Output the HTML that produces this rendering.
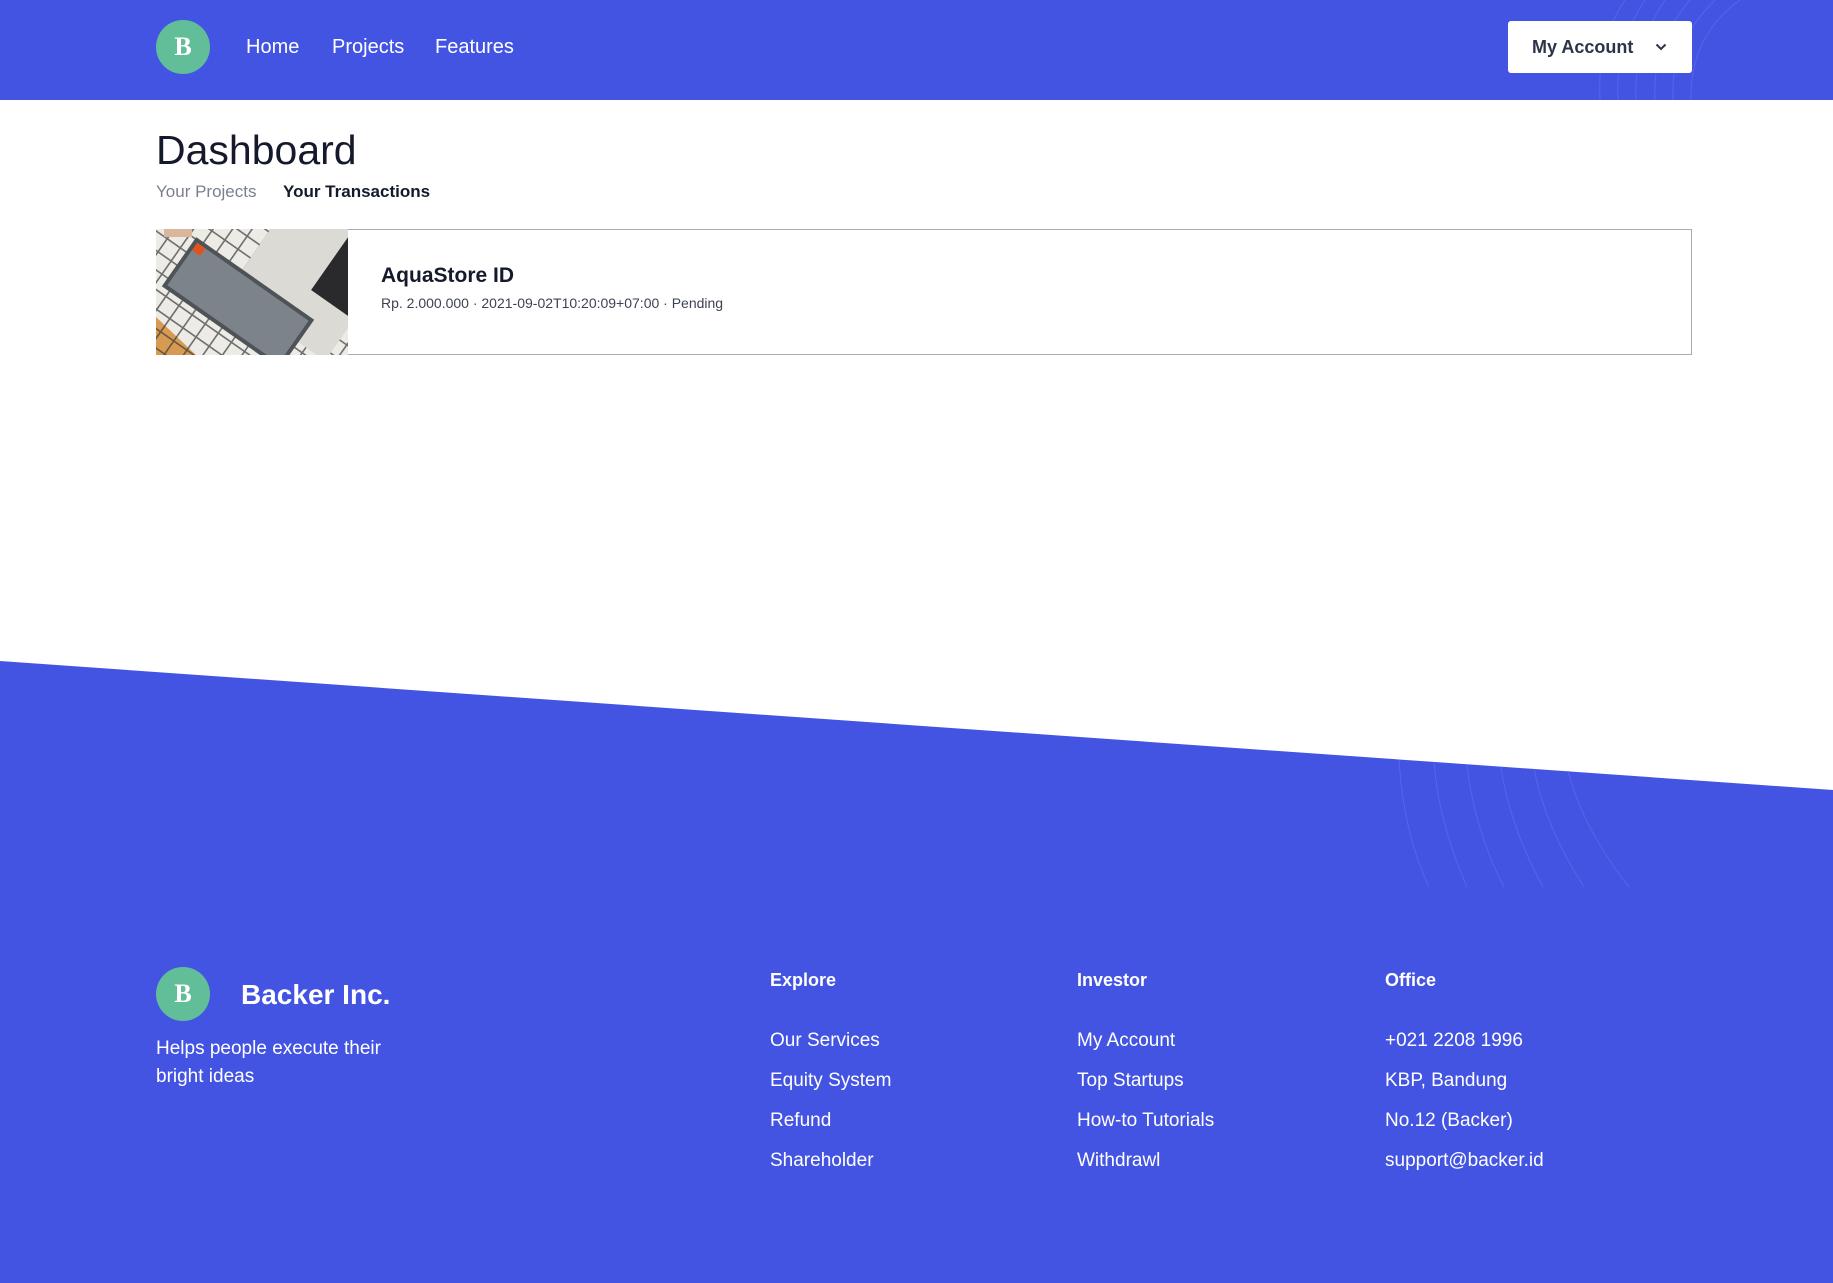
<!DOCTYPE html>
<html><head><meta charset="utf-8">
<style>
*{margin:0;padding:0;box-sizing:border-box}
html,body{width:1833px;height:1283px;overflow:hidden;background:#fff;font-family:"Liberation Sans",sans-serif}
.abs{position:absolute}
.hdr{position:absolute;left:0;top:0;width:1833px;height:100px;background:#4354e3;overflow:hidden}
.logo{position:absolute;width:54px;height:54px;border-radius:50%;background:#62bd99;color:#fff;font-family:"Liberation Serif",serif;font-weight:bold;font-size:26px;text-align:center;line-height:54px}
.nav{position:absolute;top:36px;color:#fff;font-size:20px}
.btn{position:absolute;left:1508px;top:21px;width:184px;height:52px;background:#fff;border-radius:3px;color:#2d3448;font-weight:bold;font-size:18px;line-height:52px;padding-left:24px}
.foot{color:#fff;position:absolute;font-size:19px}
.fh{font-weight:bold;font-size:18px}
</style></head><body>
<div class="hdr">
<svg class="abs" style="left:0;top:0" width="1833" height="100">
<g fill="none" stroke="#5565ea" stroke-width="1">
<path d="M1600 100 C1598 60 1605 30 1625 0"/>
<path d="M1618 100 C1616 60 1625 30 1645 0"/>
<path d="M1636 100 C1634 60 1645 30 1665 0"/>
<path d="M1655 100 C1653 60 1665 30 1690 0"/>
<path d="M1673 100 C1671 60 1685 30 1715 0"/>
<path d="M1691 100 C1690 60 1705 25 1740 0"/>
</g></svg>
<div class="logo" style="left:156px;top:20px">B</div>
<div class="nav" style="left:246px">Home</div>
<div class="nav" style="left:332px">Projects</div>
<div class="nav" style="left:435px">Features</div>
<div class="btn">My Account
<svg class="abs" style="left:147px;top:21px" width="12" height="10"><path d="M1.5 2.5 L6 7 L10.5 2.5" fill="none" stroke="#2d3448" stroke-width="2"/></svg></div>
</div>

<div class="abs" style="left:156px;top:127px;font-size:41px;color:#141a2b">Dashboard</div>
<div class="abs" style="left:156px;top:182px;font-size:17px;color:#7a8090">Your Projects</div>
<div class="abs" style="left:283px;top:182px;font-size:17px;color:#141a2b;font-weight:bold">Your Transactions</div>

<div class="abs" style="left:156px;top:229px;width:1536px;height:126px;border:1px solid #a8abb6;border-left:none;background:#fff"></div>
<svg class="abs" style="left:156px;top:229px" width="192" height="126">
<rect width="192" height="126" fill="#ecebe6"/>
<polygon points="0,88 0,126 40,126" fill="#d79a52"/>
<g transform="rotate(35 96 63)" stroke="#3a3a3a" stroke-width="1.6" opacity=".7">
<path d="M-100 -60 V200 M-84 -60 V200 M-68 -60 V200 M-52 -60 V200 M-36 -60 V200 M-20 -60 V200 M-4 -60 V200 M12 -60 V200 M28 -60 V200 M44 -60 V200 M60 -60 V200 M76 -60 V200 M92 -60 V200 M108 -60 V200 M124 -60 V200 M140 -60 V200 M156 -60 V200 M172 -60 V200 M188 -60 V200 M204 -60 V200 M220 -60 V200 M236 -60 V200 M252 -60 V200 M268 -60 V200 M284 -60 V200"/>
<path d="M-100 -60 H300 M-100 -44 H300 M-100 -28 H300 M-100 -12 H300 M-100 4 H300 M-100 20 H300 M-100 36 H300 M-100 52 H300 M-100 68 H300 M-100 84 H300 M-100 100 H300 M-100 116 H300 M-100 132 H300 M-100 148 H300 M-100 164 H300 M-100 180 H300"/>
</g>
<g transform="translate(160 40) rotate(35)">
<rect x="-60" y="-100" width="120" height="170" fill="#dcdad4"/>
<rect x="8" y="-100" width="50" height="120" fill="#2a2a2c"/>
</g>
<g transform="translate(82 74) rotate(35)">
<rect x="-72" y="-30" width="144" height="60" fill="#4e5358"/>
<rect x="-68" y="-26" width="136" height="52" fill="#7d838a"/>
<rect x="-68" y="-26" width="10" height="9" fill="#e0521e"/>
</g>
<rect x="8" y="0" width="28" height="8" fill="#d9b79a"/>
</svg>
<div class="abs" style="left:381px;top:264px;font-size:21px;font-weight:bold;color:#141a2b">AquaStore ID</div>
<div class="abs" style="left:381px;top:295px;font-size:14px;color:#3d4354">Rp. 2.000.000 · 2021-09-02T10:20:09+07:00 · Pending</div>

<svg class="abs" style="left:0;top:0" width="1833" height="1283">
<polygon points="0,661 1833,790 1833,1283 0,1283" fill="#4354e3"/>
<g fill="none" stroke="#5565ea" stroke-width="1">
<path d="M1399 760 C1402 810 1412 850 1429 887"/>
<path d="M1434 763 C1438 810 1451 850 1467 887"/>
<path d="M1467 765 C1472 810 1485 850 1504 887"/>
<path d="M1501 767 C1507 810 1523 850 1543 887"/>
<path d="M1534 769 C1542 810 1560 850 1584 887"/>
<path d="M1568 771 C1578 810 1600 850 1629 887"/>
</g></svg>

<div class="logo" style="left:156px;top:967px">B</div>
<div class="foot" style="left:241px;top:979px;font-size:28px;font-weight:bold">Backer Inc.</div>
<div class="foot" style="left:156px;top:1035px;font-size:19px;line-height:28px;width:270px">Helps people execute their bright ideas</div>

<div class="foot fh" style="left:770px;top:970px">Explore</div>
<div class="foot" style="left:770px;top:1030px">Our Services</div>
<div class="foot" style="left:770px;top:1070px">Equity System</div>
<div class="foot" style="left:770px;top:1110px">Refund</div>
<div class="foot" style="left:770px;top:1150px">Shareholder</div>

<div class="foot fh" style="left:1077px;top:970px">Investor</div>
<div class="foot" style="left:1077px;top:1030px">My Account</div>
<div class="foot" style="left:1077px;top:1070px">Top Startups</div>
<div class="foot" style="left:1077px;top:1110px">How-to Tutorials</div>
<div class="foot" style="left:1077px;top:1150px">Withdrawl</div>

<div class="foot fh" style="left:1385px;top:970px">Office</div>
<div class="foot" style="left:1385px;top:1030px">+021 2208 1996</div>
<div class="foot" style="left:1385px;top:1070px">KBP, Bandung</div>
<div class="foot" style="left:1385px;top:1110px">No.12 (Backer)</div>
<div class="foot" style="left:1385px;top:1150px">support@backer.id</div>
</body></html>
